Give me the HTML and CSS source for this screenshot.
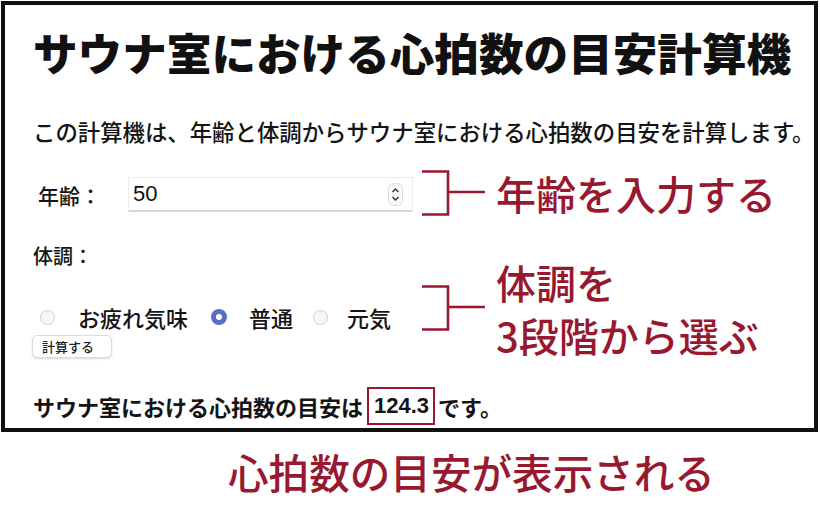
FILE: index.html
```html
<!DOCTYPE html>
<html lang="ja">
<head>
<meta charset="utf-8">
<title>サウナ室における心拍数の目安計算機</title>
<link rel="stylesheet" href="styles.css">
</head>
<body>
<div class="page">
  <div class="frame">
    <h1 class="title">サウナ室における心拍数の目安計算機</h1>
    <p class="desc">この計算機は、年齢と体調からサウナ室における心拍数の目安を計算します。</p>
    <div class="age-row">
      <label class="age-label" for="age">年齢：</label>
      <div class="num-input">
        <input id="age" class="num-field" type="text" value="50">
        <svg class="spinner" width="15" height="23" viewBox="0 0 15 23">
          <rect x="0.5" y="0.5" width="14" height="22" rx="5" fill="#fafafa" stroke="#dcdcdc"/>
          <path d="M4.5 9 L7.5 6 L10.5 9" fill="none" stroke="#333" stroke-width="1.4"/>
          <path d="M4.5 14 L7.5 17 L10.5 14" fill="none" stroke="#333" stroke-width="1.4"/>
        </svg>
      </div>
    </div>
    <div class="cond-label">体調：</div>
    <div class="radio-row">
      <input class="radio r1" type="radio" name="cond" id="c1">
      <label class="radio-text t1" for="c1">お疲れ気味</label>
      <input class="radio r2" type="radio" name="cond" id="c2" checked>
      <label class="radio-text t2" for="c2">普通</label>
      <input class="radio r3" type="radio" name="cond" id="c3">
      <label class="radio-text t3" for="c3">元気</label>
    </div>
    <button class="calc-btn" type="button">計算する</button>
    <div class="result">サウナ室における心拍数の目安は<span class="result-box">124.3</span>です。</div>
  </div>
  <p class="caption">心拍数の目安が表示される</p>

  <div class="note note-age">
    <svg class="bracket" width="66" height="46" viewBox="0 0 66 46">
      <path d="M1 1.5 H27 V44.5 H1 M27 22 H64" fill="none" stroke="#981830" stroke-width="2.6"/>
    </svg>
    <div class="note-text">年齢を入力する</div>
  </div>
  <div class="note note-cond">
    <svg class="bracket" width="66" height="46" viewBox="0 0 66 46">
      <path d="M1 1.5 H27 V44.5 H1 M27 22 H64" fill="none" stroke="#981830" stroke-width="2.6"/>
    </svg>
    <div class="note-text two">体調を<br>3段階から選ぶ</div>
  </div>
</div>
</body>
</html>
```

FILE: styles.css
```css
* { box-sizing: border-box; }
html, body {
  margin: 0;
  padding: 0;
  background: #ffffff;
}
body {
  font-family: "Liberation Sans", "Noto Sans CJK JP", sans-serif;
  color: #141414;
}
.page {
  position: relative;
  width: 820px;
  height: 510px;
  padding: 1px 0 0 1px;
}
.frame {
  width: 817px;
  border: 4px solid #111111;
  padding: 0 0 3px 28px;
  display: flex;
  flex-direction: column;
  align-items: flex-start;
}
.title {
  margin: 25px 0 0 0;
  font-family: "Noto Sans CJK JP", sans-serif;
  font-size: 44.6px;
  line-height: 44px;
  font-weight: 900;
  color: #111;
  white-space: nowrap;
}
.desc {
  margin: 46px 0 0 0;
  font-family: "Noto Sans CJK JP", sans-serif;
  font-size: 22.4px;
  line-height: 22px;
  font-weight: 500;
  white-space: nowrap;
}
.age-row {
  margin-top: 35px;
  display: flex;
  align-items: center;
  height: 35px;
}
.age-label {
  font-family: "Noto Sans CJK JP", sans-serif;
  font-size: 21px;
  line-height: 20px;
  font-weight: 500;
  margin-left: 5px;
  width: 90px;
}
.num-input {
  width: 285px;
  height: 35px;
  display: flex;
  align-items: center;
  border: 1px solid #ececec;
  border-bottom: 2px solid #d6d6d6;
  background: #fff;
  padding: 0 9px 0 4px;
}
.num-field {
  flex: 1;
  min-width: 0;
  border: none;
  outline: none;
  background: transparent;
  font-family: "Liberation Sans", sans-serif;
  font-size: 22px;
  color: #111;
  padding: 0;
}
.spinner { display: block; }
.cond-label {
  margin-top: 34px;
  font-family: "Noto Sans CJK JP", sans-serif;
  font-size: 20px;
  line-height: 20px;
  font-weight: 500;
}
.radio-row {
  margin-top: 39px;
  height: 24px;
  display: flex;
  align-items: center;
}
.radio {
  appearance: none;
  -webkit-appearance: none;
  margin: 0;
  width: 15px;
  height: 15px;
  border-radius: 50%;
  border: 1px solid #d0d0d0;
  background: #f7f7f7;
  flex: none;
}
.radio:checked {
  width: 16px;
  height: 16px;
  border: 5px solid #5b6cc4;
  background: #ffffff;
}
.r1 { margin-left: 7px; }
.r2 { margin-left: 23px; }
.r3 { margin-left: 20px; }
.radio-text {
  font-family: "Noto Sans CJK JP", sans-serif;
  font-size: 22px;
  line-height: 24px;
  font-weight: 500;
}
.t1 { margin-left: 23px; }
.t2 { margin-left: 22px; }
.t3 { margin-left: 19px; }
.calc-btn {
  margin-top: 6px;
  margin-left: -1px;
  width: 80px;
  height: 23px;
  padding: 0 0 0 9px;
  text-align: left;
  font-family: "Noto Sans CJK JP", sans-serif;
  font-size: 13px;
  font-weight: 500;
  color: #222;
  background: #ffffff;
  border: 1px solid #dcdcdc;
  border-radius: 5px;
  box-shadow: 0 1px 2px rgba(0,0,0,0.15);
}
.result {
  margin-top: 29px;
  display: flex;
  align-items: center;
  font-family: "Noto Sans CJK JP", sans-serif;
  font-size: 22px;
  line-height: 22px;
  font-weight: 700;
  white-space: nowrap;
}
.result-box {
  display: flex;
  align-items: center;
  height: 38px;
  margin: 0 3px 0 4px;
  padding: 0 4px 0 5px;
  border: 2px solid #981830;
  font-family: "Liberation Sans", sans-serif;
  font-size: 22px;
  font-weight: 700;
}
.caption {
  margin: 20px 0 0 227px;
  font-family: "Noto Sans CJK JP", sans-serif;
  font-size: 40.6px;
  line-height: 40px;
  font-weight: 500;
  color: #981830;
  white-space: nowrap;
}
.note {
  position: absolute;
  left: 421px;
  display: flex;
  align-items: center;
}
.note-age { top: 170px; }
.note-cond { top: 256px; align-items: flex-start; }
.note-cond .bracket { margin-top: 29px; }
.bracket { display: block; flex: none; }
.note-text {
  margin-left: 9px;
  font-family: "Noto Sans CJK JP", sans-serif;
  font-size: 40px;
  line-height: 46px;
  font-weight: 500;
  color: #981830;
  white-space: nowrap;
}
.note-text.two { line-height: 53px; }
```
